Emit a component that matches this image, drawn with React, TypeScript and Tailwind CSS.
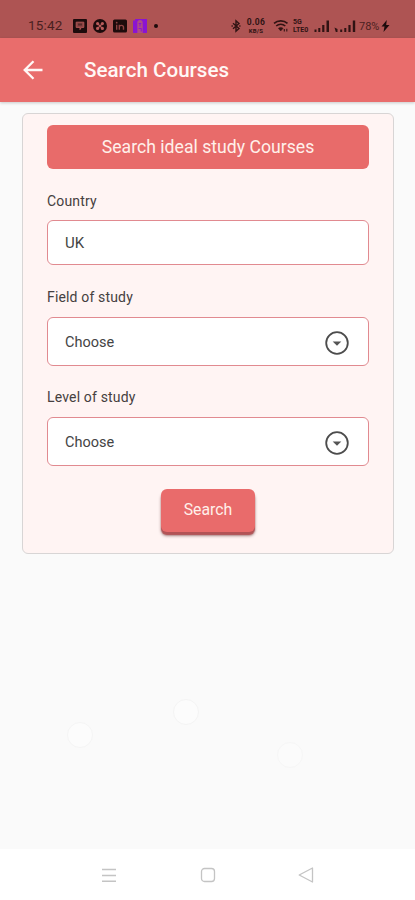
import React from "react";

const TwitchIcon = () => (
  <svg className="ml-[10px] h-[14px] w-[14px]" viewBox="0 0 14 14">
    <rect width="14" height="14" rx="1" fill="#1d0b0c" />
    <path d="M3.2 3.2h7.6v5.2H8.4L7 10.6V8.4H3.2z" fill="#8a4343" stroke="#ae5453" strokeWidth="1" />
    <path d="M6 4.5v2M8 4.5v2" stroke="#1d0b0c" strokeWidth="0.9" />
  </svg>
);

const PinwheelIcon = () => (
  <svg className="ml-[6px] h-[14px] w-[14px]" viewBox="0 0 14 14">
    <circle cx="7" cy="7" r="7" fill="#1d0b0c" />
    <g fill="#b85c5b">
      <circle cx="4.6" cy="4.6" r="1.6" />
      <circle cx="9.4" cy="4.6" r="1.6" />
      <circle cx="4.6" cy="9.4" r="1.6" />
      <circle cx="9.4" cy="9.4" r="1.6" />
    </g>
    <path d="M4.5 4.5l5 5M9.5 4.5l-5 5" stroke="#b85c5b" strokeWidth="1.2" />
  </svg>
);

const LinkedInIcon = () => (
  <svg className="ml-[6px] h-[14px] w-[14px]" viewBox="0 0 14 14">
    <rect y="0.5" width="14" height="13" rx="1.5" fill="#1d0b0c" />
    <path
      d="M3.7 5.8v5M6.3 10.8v-5M6.3 8.2c0-2.4 4.2-2.4 4.2 0v2.6"
      fill="none"
      stroke="#8d4242"
      strokeWidth="1.4"
    />
    <circle cx="3.7" cy="3.7" r="0.9" fill="#8d4242" />
  </svg>
);

const PurpleAppIcon = () => (
  <svg className="ml-[6px] h-[14px] w-[14px]" viewBox="0 0 14 14">
    <rect width="14" height="14" fill="#8a14d2" />
    <path d="M4.3 14V3.8a2.7 2.7 0 0 1 5.4 0V14z" fill="#b04b86" />
    <path d="M5.7 4.5h2.6M7 4.5v3M5.7 9.5h2.6v3" stroke="#8a14d2" strokeWidth="1" fill="none" />
    <path d="M0 0h2v1.5H0z" fill="#ae5453" />
  </svg>
);

const BluetoothIcon = () => (
  <svg className="h-[14px] w-[10px]" viewBox="0 0 10 14" fill="none" stroke="#301313" strokeWidth="1.4">
    <path d="M2 4.3l6 5.2-3 2.7V1.8l3 2.7-6 5.2" />
    <path d="M0.5 7h1.3M8.2 7h1.3" />
  </svg>
);

const WifiIcon = () => (
  <svg className="ml-[7px] h-[14px] w-[16px]" viewBox="0 0 16 14" fill="none" stroke="#301313">
    <path d="M1 4.4c3.8-3.4 9.7-3.4 13.5 0" strokeWidth="1.6" />
    <path d="M3.2 7c2.6-2.3 6.5-2.3 9.1 0" strokeWidth="1.5" />
    <path d="M5.4 9.3c1.4-1.2 3.2-1.2 4.7 0L7.7 12z" fill="#301313" strokeWidth="0.5" />
    <path d="M11.3 12.5V10M13.8 9.8v2.7" strokeWidth="1.1" />
  </svg>
);

const SignalOne = () => (
  <svg className="ml-[4px] h-[14px] w-[16px]" viewBox="0 0 16 14" fill="#301313">
    <path d="M0.5 10.5h2V13h-2zM4.3 9h2v4h-2zM8.2 6h2.2v7H8.2zM12.5 1.5H15V13h-2.5z" />
  </svg>
);

const SignalTwo = () => (
  <svg className="ml-[4px] h-[14px] w-[22px]" viewBox="0 0 22 14" fill="#301313">
    <path d="M0.5 8.5l3 1.5V13H1.8zM6.2 10.5h2V13h-2zM10.3 9h2v4h-2zM14.4 6h2.2v7h-2.2zM18.8 1.5h2.4V13h-2.4z" />
  </svg>
);

const StatusBar = () => (
  <div className="flex h-[38px] items-center bg-[#ae5453] pl-7 pt-[14px] text-[#4a1f1f]">
    <span className="w-[35px] whitespace-nowrap text-[13.5px] leading-none tracking-[0.2px]">15:42</span>
    <TwitchIcon />
    <PinwheelIcon />
    <LinkedInIcon />
    <PurpleAppIcon />
    <span className="ml-[7px] h-1 w-1 rounded-full bg-[#1d0b0c]" />
    <div className="ml-[73px] flex items-center">
      <BluetoothIcon />
      <div className="ml-[5px] flex w-[20px] flex-col items-center font-bold text-[#301313]">
        <div className="text-[8.5px] leading-[9px] tracking-[0.4px]">0.06</div>
        <div className="text-[6px] leading-[7px] tracking-[0.2px]">KB/S</div>
      </div>
      <WifiIcon />
      <div className="ml-[4px] flex w-[17px] flex-col font-bold text-[#301313]">
        <div className="text-[7px] leading-[8px]">5G</div>
        <div className="whitespace-nowrap text-[7px] leading-[8px]">LTE0</div>
      </div>
      <SignalOne />
      <SignalTwo />
      <span className="ml-[3px] w-[21px] whitespace-nowrap text-[11px] leading-none">78%</span>
      <svg className="ml-[1px] h-[12px] w-[9px]" viewBox="0 0 9 12" fill="#1d0b0c">
        <path d="M5.8 0L0.5 6.5h3L2.5 12 8.5 5H5.2z" />
      </svg>
    </div>
  </div>
);

const AppBar = () => (
  <header className="relative flex h-16 items-center bg-[#e96d6c] pl-[22px] shadow-[0_1px_3px_rgba(0,0,0,0.2)]">
    <svg
      className="h-[22px] w-[22px]"
      viewBox="0 0 22 22"
      fill="none"
      stroke="#fff8f6"
      strokeWidth="2.3"
    >
      <path d="M20.5 11H3M11.5 2.2L2.7 11l8.8 8.8" />
    </svg>
    <h1 className="ml-[40px] text-[20.6px] font-medium text-[#fff8f6]">Search Courses</h1>
  </header>
);

const Label = ({ children }: { children: React.ReactNode }) => (
  <div className="text-[14px] leading-4 tracking-[0.16px] text-[#454040]">{children}</div>
);

const Select = () => (
  <div className="mt-3 flex h-[49px] items-center justify-between rounded-md border border-[#e18a90] bg-white pl-[17px] pr-[19px]">
    <span className="pt-[2px] text-[14.5px] text-[#444]">Choose</span>
    <svg className="mt-[3px] h-6 w-6" viewBox="0 0 24 24">
      <circle cx="12" cy="12" r="10.8" fill="none" stroke="#4c4c4c" strokeWidth="1.8" />
      <path d="M7.7 10.5h8.6L12 14.8z" fill="#555" />
    </svg>
  </div>
);

const NavBar = () => (
  <nav className="flex h-[51px] items-center bg-white pl-[101px] text-[#c4c4c4]">
    <svg className="h-4 w-4" viewBox="0 0 16 16" stroke="currentColor" strokeWidth="1.5">
      <path d="M1 2.5h14M1 8.5h14M1 14.2h14" />
    </svg>
    <svg className="ml-[83px] h-4 w-4" viewBox="0 0 16 16" fill="none" stroke="currentColor" strokeWidth="1.3">
      <rect x="1.5" y="1.5" width="13" height="13" rx="3" />
    </svg>
    <svg
      className="ml-[82px] h-4 w-4"
      viewBox="0 0 16 16"
      fill="none"
      stroke="currentColor"
      strokeWidth="1.3"
      strokeLinejoin="round"
    >
      <path d="M14.5 1v14L1.2 8z" />
    </svg>
  </nav>
);

export default function App() {
  return (
    <div className="flex h-[900px] w-[415px] flex-col overflow-hidden bg-[#fafafa] font-['Roboto',sans-serif]">
      <StatusBar />
      <AppBar />
      <main className="relative flex-1 pl-[22px] pt-[11px]">
        <div className="flex h-[441px] w-[372px] flex-col rounded-md border border-[#d8d5d5] bg-[#fff4f3] px-6 pt-[11px]">
          <div className="flex h-11 items-center justify-center rounded-md bg-[#e86b6a] text-[17.65px] text-[#fff0ea]">
            Search ideal study Courses
          </div>
          <div className="mt-6">
            <Label>Country</Label>
            <div className="mt-[11px] flex h-[45px] items-center rounded-md border border-[#e18a90] bg-white pl-[17px] pt-[2px] text-[15px] text-[#444]">
              UK
            </div>
          </div>
          <div className="mt-6">
            <Label>Field of study</Label>
            <Select />
          </div>
          <div className="mt-[23px]">
            <Label>Level of study</Label>
            <Select />
          </div>
          <button className="mt-[23px] h-[43px] w-[94px] self-center rounded-md bg-[#e96b6b] pb-[2px] text-[15.8px] text-[#fff0ea] shadow-[0_3px_1px_#b25356,0_4px_3px_rgba(80,30,30,0.5)]">
            Search
          </button>
        </div>
        <span className="absolute left-[67px] top-[620px] h-[26px] w-[26px] rounded-full border border-[#f5f5f5] bg-[#fcfcfc]" />
        <span className="absolute left-[173px] top-[597px] h-[26px] w-[26px] rounded-full border border-[#f4f4f4] bg-[#fcfcfc]" />
        <span className="absolute left-[277px] top-[640px] h-[26px] w-[26px] rounded-full border border-[#f6f6f6] bg-[#fbfbfb]" />
      </main>
      <NavBar />
    </div>
  );
}
